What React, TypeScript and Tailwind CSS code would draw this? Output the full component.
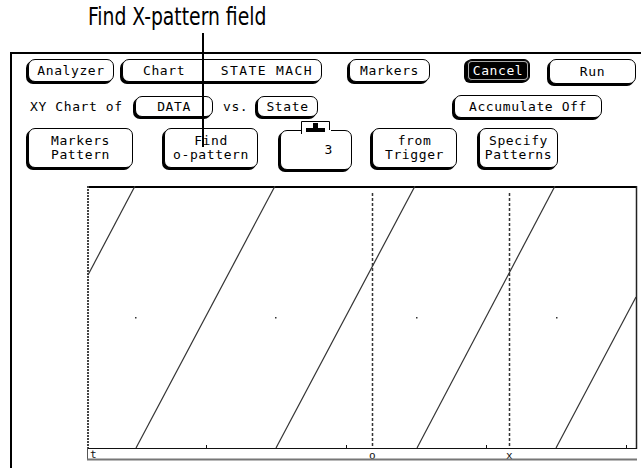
import React from "react";

const ui = "font-['DejaVu_Sans_Mono','Liberation_Mono',monospace] text-[13px] tracking-[0.6px] text-black";
const key =
  "flex shrink-0 items-center justify-center rounded-[7px] border border-black bg-white text-center shadow-[-2px_2px_0_#000]";

function Key({ className, children }: { className: string; children: React.ReactNode }) {
  return <div className={`${key} ${className}`}>{children}</div>;
}

// ramps of the state sawtooth, in plot coordinates
const ramps = [
  [1, 89, 48, 0],
  [49, 262, 188, 0],
  [189, 262, 328, 0],
  [330, 262, 468, 0],
  [469, 262, 549, 111],
];
const ticks = [119, 259, 399, 539];
const dots = [48, 188, 329, 469];
const markers = [
  { x: 285.5, label: "o" },
  { x: 422.5, label: "x" },
];

function Chart() {
  return (
    <svg width="551" height="276" className="block">
      <line x1="0" y1="1" x2="550" y2="1" stroke="#000" strokeWidth="2" />
      <line x1="549.5" y1="0" x2="549.5" y2="263" stroke="#222" strokeWidth="1.5" />
      <line x1="1" y1="0" x2="1" y2="263" stroke="#444" strokeWidth="2" strokeDasharray="2 1" />
      <line x1="0" y1="262.5" x2="550" y2="262.5" stroke="#111" />
      {ticks.map((t) => (
        <line key={t} x1={t + 0.5} y1="259" x2={t + 0.5} y2="262" stroke="#111" />
      ))}
      {dots.map((d) => (
        <rect key={d} x={d} y="131" width="1.5" height="1.5" fill="#333" />
      ))}
      {ramps.map(([x1, y1, x2, y2], i) => (
        <line key={i} x1={x1} y1={y1} x2={x2} y2={y2} stroke="#333" strokeWidth="1.2" />
      ))}
      {markers.map((m) => (
        <g key={m.label}>
          <line x1={m.x} y1="7" x2={m.x} y2="262" stroke="#333" strokeWidth="1.5" strokeDasharray="3 2" />
          <text
            x={m.x}
            y="273"
            textAnchor="middle"
            fontSize="11"
            fontFamily="DejaVu Sans Mono, monospace"
            fill="#111"
          >
            {m.label}
          </text>
        </g>
      ))}
      <line x1="0.5" y1="262" x2="0.5" y2="274" stroke="#555" />
      <line x1="0" y1="273.5" x2="550" y2="273.5" stroke="#777" strokeWidth="2" />
      <text x="3" y="272" fontSize="11" fontFamily="DejaVu Sans Mono, monospace" fill="#111">
        t
      </text>
    </svg>
  );
}

export default function App() {
  return (
    <div className="relative h-[468px] w-[641px] overflow-hidden bg-white">
      <div className="h-[52px] pl-[88px] pt-[5px] font-['Liberation_Sans_Narrow','DejaVu_Sans_Condensed','Liberation_Sans',sans-serif] text-[24px] leading-[24px] text-black">
        <span className="inline-block origin-left scale-x-[0.87] whitespace-nowrap">Find X-pattern field</span>
      </div>
      <div className="absolute left-[202px] top-[33px] h-[114px] w-[2px] bg-black" />

      <div className={`ml-[10px] h-[420px] border-l-2 border-t-2 border-black pl-[16px] pt-[5px] ${ui}`}>
        <div className="flex h-[23px] items-start">
          <Key className="h-[23px] w-[86px]">Analyzer</Key>
          <Key className="ml-[8px] h-[23px] w-[200px] !justify-between pl-[20px] pr-[8px]">
            <span>Chart</span>
            <span className="tracking-[1.4px]">STATE MACH</span>
          </Key>
          <Key className="ml-[27px] h-[23px] w-[81px]">Markers</Key>
          <div className="ml-[36px] flex h-[23px] w-[64px] shrink-0 items-center justify-center rounded-[6px] border border-black bg-black text-white shadow-[inset_0_0_0_1px_#000,inset_0_0_0_2px_#aaa,-2px_1px_0_#000]">
            Cancel
          </div>
          <Key className="ml-[19px] h-[25px] w-[87px]">Run</Key>
        </div>

        <div className="mt-[13px] flex h-[23px] items-center">
          <div className="ml-[2px] w-[100px] shrink-0">XY Chart of</div>
          <Key className="ml-[5px] h-[21px] w-[78px]">DATA</Key>
          <div className="ml-[10px] w-[32px] shrink-0">vs.</div>
          <Key className="ml-[2px] h-[21px] w-[61px]">State</Key>
          <Key className="ml-[136px] h-[23px] w-[148px]">Accumulate Off</Key>
        </div>

        <div className="mt-[10px] flex h-[42px] items-start leading-[14px]">
          <Key className="h-[40px] w-[105px] flex-col">
            <span>Markers</span>
            <span>Pattern</span>
          </Key>
          <Key className="ml-[31px] h-[40px] w-[94px] flex-col">
            <span>Find</span>
            <span>o-pattern</span>
          </Key>
          <div className="relative ml-[22px] mt-[2px] shrink-0">
            <Key className="h-[40px] w-[72px] !justify-end pr-[18px]">3</Key>
            <svg width="32" height="13" className="absolute left-[20px] top-[-9px]">
              <rect x="1" y="0" width="30" height="13" fill="#fff" />
              <path d="M1.5 13 V0.5 H29.5 V9" fill="none" stroke="#000" />
              <rect x="13" y="2" width="5" height="6" fill="#000" />
              <rect x="6" y="7" width="19" height="4" fill="#000" />
            </svg>
          </div>
          <Key className="ml-[20px] h-[40px] w-[85px] flex-col">
            <span>from</span>
            <span>Trigger</span>
          </Key>
          <Key className="ml-[22px] h-[40px] w-[79px] flex-col">
            <span>Specify</span>
            <span>Patterns</span>
          </Key>
        </div>

        <div className="ml-[59px] mt-[16px]">
          <Chart />
        </div>
      </div>
    </div>
  );
}
